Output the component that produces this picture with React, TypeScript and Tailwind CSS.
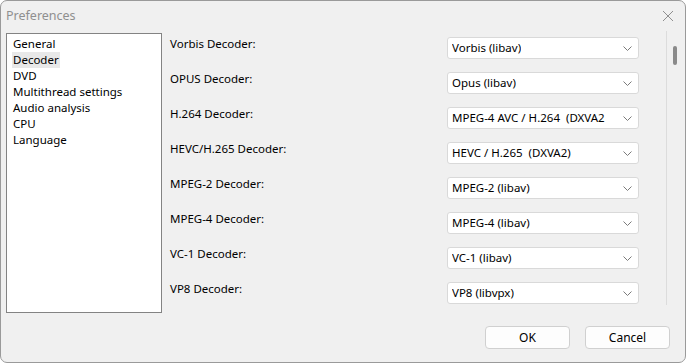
import { useState } from 'react';

const pages = ['General', 'Decoder', 'DVD', 'Multithread settings', 'Audio analysis', 'CPU', 'Language'];

const decoders = [
  { label: 'Vorbis Decoder:', value: 'Vorbis (libav)' },
  { label: 'OPUS Decoder:', value: 'Opus (libav)' },
  { label: 'H.264 Decoder:', value: 'MPEG-4 AVC / H.264  (DXVA2' },
  { label: 'HEVC/H.265 Decoder:', value: 'HEVC / H.265  (DXVA2)' },
  { label: 'MPEG-2 Decoder:', value: 'MPEG-2 (libav)' },
  { label: 'MPEG-4 Decoder:', value: 'MPEG-4 (libav)' },
  { label: 'VC-1 Decoder:', value: 'VC-1 (libav)' },
  { label: 'VP8 Decoder:', value: 'VP8 (libvpx)' },
];

function Chevron() {
  return (
    <svg width="9" height="5" viewBox="0 0 9 5" className="shrink-0">
      <path d="M0.5 0.5l4 4 4-4" fill="none" stroke="#7a7a7a" strokeWidth="1" />
    </svg>
  );
}

export default function App() {
  const [selected, setSelected] = useState('Decoder');

  return (
    <div
      className="w-[686px] h-[363px] bg-[#f0f0f0] border border-[#9a9a9a] rounded-[7px] overflow-hidden flex flex-col text-[11.5px] text-black"
      style={{ fontFamily: '"Noto Sans", "Open Sans", sans-serif' }}
    >
      {/* title bar */}
      <div className="h-[30px] flex items-center justify-between pl-[5px] pr-[11px] shrink-0">
        <span className="text-[12.5px] text-[#8f8f8f]">Preferences</span>
        <svg width="12" height="12" viewBox="0 0 12 12">
          <path d="M1 1l10 10M11 1L1 11" stroke="#8f8f8f" strokeWidth="1" />
        </svg>
      </div>

      <div className="flex pl-[5px]">
        {/* page list */}
        <div className="w-[156px] h-[280px] mt-[2px] bg-white border border-[#838383] pt-[2px] pl-[5px] shrink-0">
          {pages.map((p) => (
            <div key={p} className="h-[16px] leading-[16px]">
              <span
                onClick={() => setSelected(p)}
                className={`px-[1px] inline-block ${selected === p ? 'bg-[#e8e8e8]' : ''}`}
              >
                {p}
              </span>
            </div>
          ))}
        </div>

        {/* decoder settings */}
        <div className="w-[502px] h-[274px] ml-[3px] border-r border-[#dcdcdc] overflow-hidden shrink-0">
          <div className="flex flex-col gap-[13px] pt-[6px] pl-[5px]">
            {decoders.map((d) => (
              <div key={d.label} className="flex items-start h-[22px]">
                <span className="w-[277px] leading-[16px] -mt-[1px]">{d.label}</span>
                <div className="w-[192px] h-[22px] bg-white border border-[#d9d9d9] rounded-[3px] flex items-center justify-between pl-[4px] pr-[6px]">
                  <span className="whitespace-pre overflow-hidden">{d.value}</span>
                  <Chevron />
                </div>
              </div>
            ))}
          </div>
        </div>

        {/* scrollbar */}
        <div className="pl-[6px] pt-[15px]">
          <div className="w-[4px] h-[19px] bg-[#8a8a8a] rounded-[2px]" />
        </div>
      </div>

      {/* buttons */}
      <div className="flex justify-end gap-[15px] pr-[15px] mt-[13px]">
        <button className="w-[85px] h-[23px] bg-[#fdfdfd] border border-[#d0d0d0] rounded-[4px] text-[12px]">OK</button>
        <button className="w-[85px] h-[23px] bg-[#fdfdfd] border border-[#d0d0d0] rounded-[4px] text-[12px]">Cancel</button>
      </div>
    </div>
  );
}
